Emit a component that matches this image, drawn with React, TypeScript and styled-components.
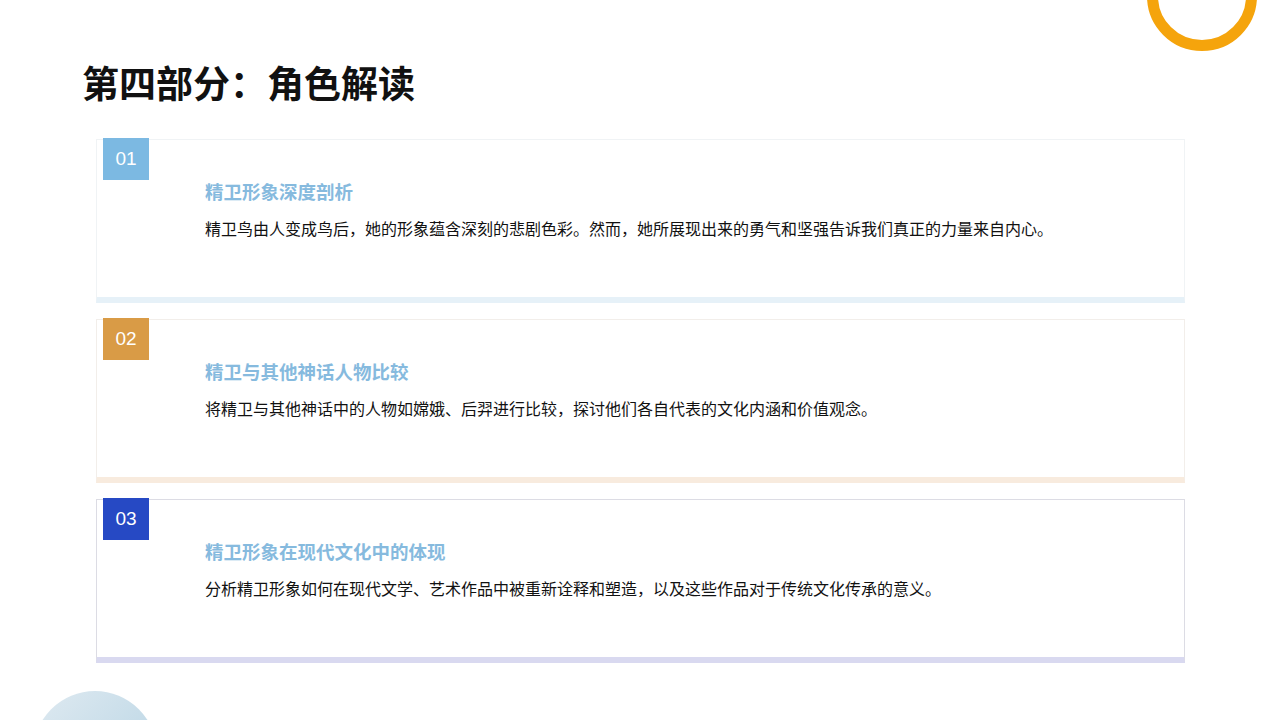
import React from "react";
import styled, { createGlobalStyle } from "styled-components";

const Global = createGlobalStyle`
  html, body { margin: 0; padding: 0; background: #fff; }
  body { font-family: "Liberation Sans", "Noto Sans CJK SC", sans-serif; }
`;

const Page = styled.div`
  position: relative;
  width: 1280px;
  height: 720px;
  overflow: hidden;
  background: #fff;
  box-sizing: border-box;
  padding: 60px 95px 0 96px;
`;

const Ring = styled.div`
  position: absolute;
  left: 1147px;
  top: -59px;
  width: 110px;
  height: 110px;
  border-radius: 50%;
  border: 11px solid #f5a40c;
  box-sizing: border-box;
`;

const Ball = styled.div`
  position: absolute;
  left: 33px;
  top: 691px;
  width: 124px;
  height: 124px;
  border-radius: 50%;
  background: linear-gradient(135deg, #dfeaf1 0%, #c4dbe8 60%, #b4cfe0 100%);
`;

const Heading = styled.h1`
  margin: 0 0 27px -14px;
  font-size: 37px;
  line-height: 52px;
  font-weight: 700;
  color: #111;
`;

const List = styled.div`
  display: flex;
  flex-direction: column;
  gap: 16px;
`;

const Card = styled.div<{ $bar: string; $border: string }>`
  position: relative;
  height: 164px;
  box-sizing: border-box;
  border: 1px solid ${(p) => p.$border};
  border-bottom: 6px solid ${(p) => p.$bar};
  padding: 40px 20px 0 108px;
  background: #fff;
`;

const Badge = styled.div<{ $bg: string }>`
  position: absolute;
  left: 6px;
  top: -2px;
  width: 46px;
  height: 42px;
  background: ${(p) => p.$bg};
  color: #fff;
  font-size: 19px;
  display: flex;
  align-items: center;
  justify-content: center;
`;

const Title = styled.div`
  font-size: 18.5px;
  font-weight: 700;
  color: #86bade;
  line-height: 26px;
`;

const Desc = styled.div`
  margin-top: 13px;
  font-size: 16px;
  color: #111;
  line-height: 22px;
`;

const items = [
  { n: "01", bg: "#7cb9e2", bar: "#e6f1f8", border: "#f0f3f5", t: "精卫形象深度剖析", d: "精卫鸟由人变成鸟后，她的形象蕴含深刻的悲剧色彩。然而，她所展现出来的勇气和坚强告诉我们真正的力量来自内心。" },
  { n: "02", bg: "#d99b46", bar: "#f8ebde", border: "#f2eeea", t: "精卫与其他神话人物比较", d: "将精卫与其他神话中的人物如嫦娥、后羿进行比较，探讨他们各自代表的文化内涵和价值观念。" },
  { n: "03", bg: "#2649c4", bar: "#d9d9f0", border: "#dcdce4", t: "精卫形象在现代文化中的体现", d: "分析精卫形象如何在现代文学、艺术作品中被重新诠释和塑造，以及这些作品对于传统文化传承的意义。" },
];

export default function App() {
  return (
    <>
      <Global />
      <Page>
        <Ring />
        <Ball />
        <Heading>第四部分：角色解读</Heading>
        <List>
          {items.map((it) => (
            <Card key={it.n} $bar={it.bar} $border={it.border}>
              <Badge $bg={it.bg}>{it.n}</Badge>
              <Title>{it.t}</Title>
              <Desc>{it.d}</Desc>
            </Card>
          ))}
        </List>
      </Page>
    </>
  );
}
